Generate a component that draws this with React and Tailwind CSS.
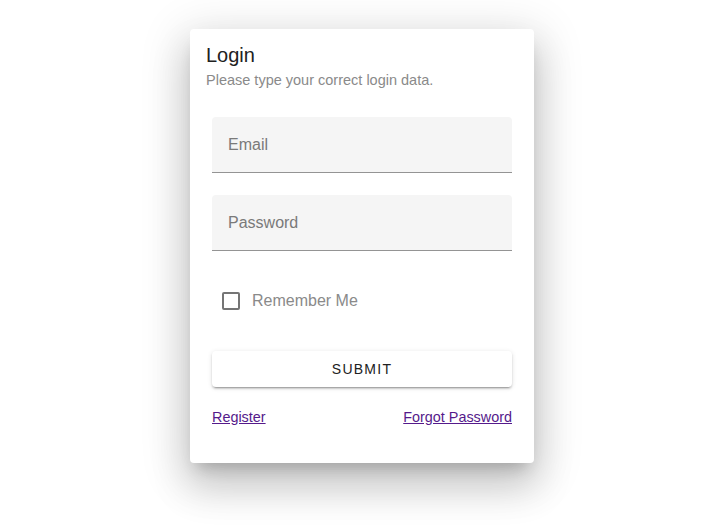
export default function App() {
  return (
    <div className="min-h-[531px] w-full bg-white flex justify-center pt-[29px] pr-px" style={{ fontFamily: '"Liberation Sans", Arial, sans-serif' }}>
      <div className="w-[344px] h-[434px] bg-white rounded-[4px] p-4 shadow-[0px_11px_15px_-7px_rgba(0,0,0,0.2),0px_24px_38px_3px_rgba(0,0,0,0.14),0px_9px_46px_8px_rgba(0,0,0,0.12)]">
        <div className="text-[20px] leading-[20px] text-[#212121]">Login</div>
        <div className="mt-[5px] text-[14.5px] leading-[20px] text-[#8a8a8a]">Please type your correct login data.</div>
        <div className="px-[6px] mt-[27px] flex flex-col">
          <div className="h-[56px] bg-[#f5f5f5] rounded-t-[4px] border-b border-[#949494] flex items-center px-4">
            <span className="text-[16px] leading-[24px] text-[#7a7a7a]">Email</span>
          </div>
          <div className="mt-[22px] h-[56px] bg-[#f5f5f5] rounded-t-[4px] border-b border-[#949494] flex items-center px-4">
            <span className="text-[16px] leading-[24px] text-[#7a7a7a]">Password</span>
          </div>
          <div className="mt-[29px] flex items-center h-[42px] pl-[10px]">
            <div className="w-[18px] h-[18px] border-2 border-[#757575] rounded-[2px]"></div>
            <span className="ml-[12px] text-[16px] leading-[24px] text-[#8a8a8a]">Remember Me</span>
          </div>
          <button className="mt-[29px] h-[36px] w-full bg-white rounded-[4px] text-[14px] tracking-[1.25px] text-[#212121] shadow-[0px_3px_1px_-2px_rgba(0,0,0,0.2),0px_2px_2px_0px_rgba(0,0,0,0.14),0px_1px_5px_0px_rgba(0,0,0,0.12)]">
            SUBMIT
          </button>
          <div className="mt-[20px] flex justify-between text-[14.4px] leading-[20px]">
            <a href="#" className="text-[#551a8b] underline">Register</a>
            <a href="#" className="text-[#551a8b] underline">Forgot Password</a>
          </div>
        </div>
      </div>
    </div>
  );
}
